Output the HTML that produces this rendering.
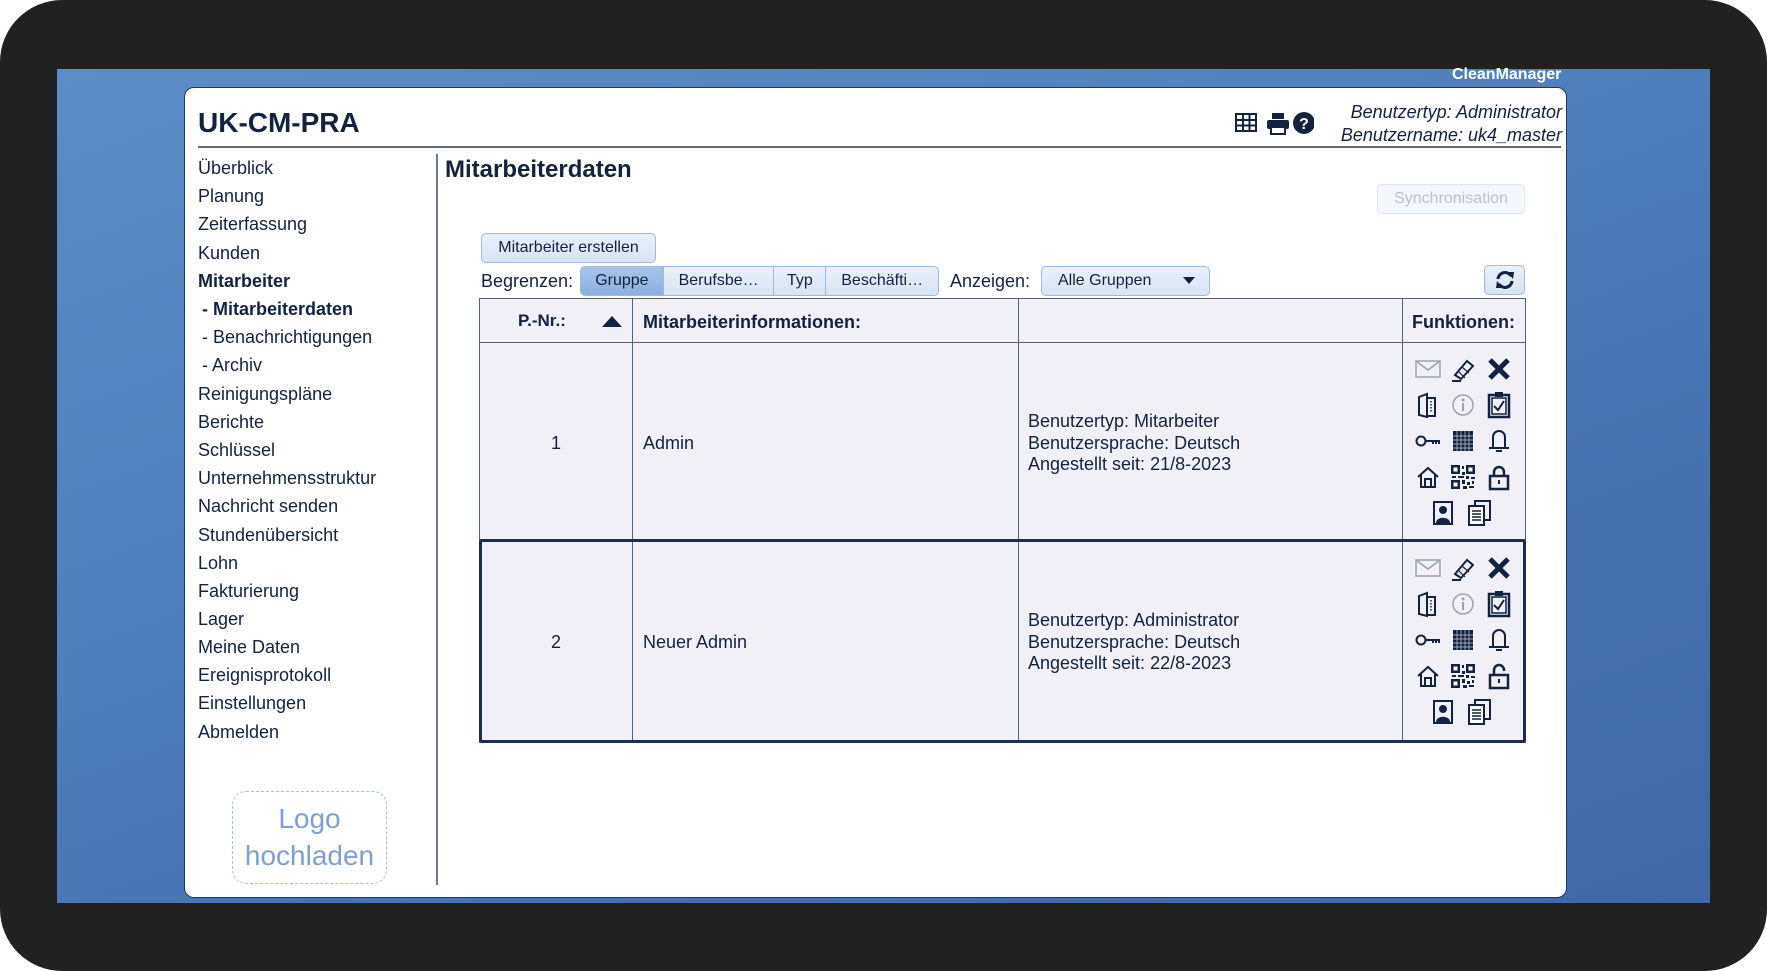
<!DOCTYPE html>
<html><head><meta charset="utf-8">
<style>
*{margin:0;padding:0;box-sizing:border-box}
body{width:1767px;height:971px;overflow:hidden;background:#fff;font-family:"Liberation Sans",sans-serif;color:#13223f;position:relative}
.frame{position:absolute;left:0;top:0;width:1767px;height:971px;border-radius:62px;background:#212121}
.blue{position:absolute;left:57px;top:69px;width:1653px;height:834px;background:linear-gradient(160deg,#5d8dc8 0%,#4f7fbd 40%,#4672b0 70%,#3f68a6 100%)}
.cm{position:absolute;left:1452px;top:66px;color:#fff;font-weight:bold;font-size:16px}
.panel{position:absolute;left:184px;top:87px;width:1383px;height:811px;background:#fff;border-radius:10px 10px 10px 10px;border:1px solid #24385a}
.abs{position:absolute}
.side div{position:absolute;left:198px;font-size:18px;white-space:nowrap}
.btn{position:absolute;border:1px solid #9dbbe0;background:linear-gradient(#e9f0f9,#d7e4f4);border-radius:5px;font-size:16px;display:flex;align-items:center;justify-content:center}
table{border-collapse:collapse}
.ic{position:absolute;width:28px;height:28px}
</style></head><body>
<div class="frame"></div>
<div class="blue"></div>
<div class="cm">CleanManager</div>
<div class="panel"></div>
<div class="abs" style="left:198px;top:107px;font-size:28px;font-weight:bold">UK-CM-PRA</div>
<div class="abs" style="left:198px;top:146px;width:1363px;height:2px;background:#5c6a80"></div>
<div class="abs" style="right:205px;top:101px;font-size:18px;font-style:italic;text-align:right;line-height:23px">Benutzertyp: Administrator<br>Benutzername: uk4_master</div>
<svg class="abs" style="left:1234px;top:111px" width="80" height="26" viewBox="0 0 80 26">
<g fill="none" stroke="#13223f" stroke-width="2"><rect x="2" y="3" width="20" height="17"/><path d="M2 9H22M2 14.5H22M9 3V20M15.5 3V20"/></g>
<g fill="#13223f"><rect x="38" y="2" width="12" height="6"/><rect x="33" y="9" width="22" height="9" rx="2"/><rect x="37" y="16" width="14" height="7" fill="#fff" stroke="#13223f" stroke-width="2"/></g>
<circle cx="70" cy="12" r="11" fill="#13223f"/><text x="70" y="18" font-size="16" font-weight="bold" fill="#fff" text-anchor="middle" font-family="Liberation Sans">?</text>
</svg>
<div class="side">
<div style="top:158px">Überblick</div>
<div style="top:186px">Planung</div>
<div style="top:214px">Zeiterfassung</div>
<div style="top:243px">Kunden</div>
<div style="top:271px;font-weight:bold">Mitarbeiter</div>
<div style="top:299px;font-weight:bold;left:202px">- Mitarbeiterdaten</div>
<div style="top:327px;left:202px">- Benachrichtigungen</div>
<div style="top:355px;left:202px">- Archiv</div>
<div style="top:384px">Reinigungspläne</div>
<div style="top:412px">Berichte</div>
<div style="top:440px">Schlüssel</div>
<div style="top:468px">Unternehmensstruktur</div>
<div style="top:496px">Nachricht senden</div>
<div style="top:525px">Stundenübersicht</div>
<div style="top:553px">Lohn</div>
<div style="top:581px">Fakturierung</div>
<div style="top:609px">Lager</div>
<div style="top:637px">Meine Daten</div>
<div style="top:665px">Ereignisprotokoll</div>
<div style="top:693px">Einstellungen</div>
<div style="top:722px">Abmelden</div>
</div>
<div class="abs" style="left:436px;top:154px;width:2px;height:731px;background:#6b7890"></div>
<div class="abs" style="left:232px;top:791px;width:155px;height:93px;border:1.5px dashed #a9c0e4;border-radius:14px;color:#7d9fd6;font-size:28px;text-align:center;line-height:37px;padding-top:8px">Logo<br>hochladen</div>
<div class="abs" style="left:445px;top:156px;font-size:24px;font-weight:bold">Mitarbeiterdaten</div>
<div class="btn" style="left:1377px;top:184px;width:148px;height:30px;color:#b8c3d2;border-color:#dde5ef;background:#f4f7fb">Synchronisation</div>
<div class="btn" style="left:481px;top:233px;width:175px;height:30px">Mitarbeiter erstellen</div>
<div class="abs" style="left:481px;top:271px;font-size:18px">Begrenzen:</div>
<div class="btn" style="left:580px;top:266px;width:359px;height:30px;padding:0;overflow:hidden;justify-content:flex-start">
<div style="width:83px;height:100%;background:linear-gradient(#a9c4ea,#8db0e0);display:flex;align-items:center;justify-content:center;border-right:1px solid #9dbbe0">Gruppe</div>
<div style="width:111px;height:100%;display:flex;align-items:center;justify-content:center;border-right:1px solid #9dbbe0">Berufsbe…</div>
<div style="width:52px;height:100%;display:flex;align-items:center;justify-content:center;border-right:1px solid #9dbbe0">Typ</div>
<div style="width:112px;height:100%;display:flex;align-items:center;justify-content:center">Beschäfti…</div>
</div>
<div class="abs" style="left:950px;top:271px;font-size:18px">Anzeigen:</div>
<div class="btn" style="left:1041px;top:266px;width:169px;height:30px;justify-content:flex-start;padding-left:16px">Alle Gruppen<span style="position:absolute;right:14px;top:10px;width:0;height:0;border-left:6px solid transparent;border-right:6px solid transparent;border-top:7px solid #13223f"></span></div>
<div class="btn" style="left:1484px;top:265px;width:41px;height:30px">
<svg width="22" height="22" viewBox="0 0 22 22"><g fill="none" stroke="#13223f" stroke-width="3"><path d="M4 10A7 7 0 0 1 17 7"/><path d="M18 12A7 7 0 0 1 5 15"/></g><path d="M13 3L20 3L19 10Z" fill="#13223f"/><path d="M9 19L2 19L3 12Z" fill="#13223f"/></svg></div>

<div class="abs" style="left:479px;top:298px;width:1047px;height:445px;background:#f0f0f6;border:1px solid #55617a"></div>
<div class="abs" style="left:479px;top:342px;width:1047px;height:1px;background:#55617a"></div>
<div class="abs" style="left:479px;top:539px;width:1047px;height:1px;background:#55617a"></div>
<div class="abs" style="left:632px;top:298px;width:1px;height:445px;background:#55617a"></div>
<div class="abs" style="left:1018px;top:298px;width:1px;height:445px;background:#55617a"></div>
<div class="abs" style="left:1402px;top:298px;width:1px;height:445px;background:#55617a"></div>
<div class="abs" style="left:479px;top:539px;width:1047px;height:204px;border:3.5px solid #1d2e4d;border-radius:3px"></div>
<div class="abs" style="left:518px;top:311px;font-size:17px;font-weight:bold">P.-Nr.:</div>
<div class="abs" style="left:602px;top:316px;width:0;height:0;border-left:10px solid transparent;border-right:10px solid transparent;border-bottom:11px solid #13223f"></div>
<div class="abs" style="left:643px;top:312px;font-size:18px;font-weight:bold">Mitarbeiterinformationen:</div>
<div class="abs" style="left:1412px;top:312px;font-size:18px;font-weight:bold">Funktionen:</div>
<div class="abs" style="left:551px;top:433px;font-size:18px">1</div>
<div class="abs" style="left:643px;top:433px;font-size:18px">Admin</div>
<div class="abs" style="left:1028px;top:411px;font-size:18px;line-height:21.5px">Benutzertyp: Mitarbeiter<br>Benutzersprache: Deutsch<br>Angestellt seit: 21/8-2023</div>
<div class="abs" style="left:551px;top:632px;font-size:18px">2</div>
<div class="abs" style="left:643px;top:632px;font-size:18px">Neuer Admin</div>
<div class="abs" style="left:1028px;top:610px;font-size:18px;line-height:21.5px">Benutzertyp: Administrator<br>Benutzersprache: Deutsch<br>Angestellt seit: 22/8-2023</div>

<svg width="0" height="0" style="position:absolute">
<defs>
<g id="mail"><rect x="2" y="6" width="24" height="16" fill="none" stroke="#9aa3b3" stroke-width="1.5"/><path d="M2 6L14 15L26 6" fill="none" stroke="#9aa3b3" stroke-width="1.5"/></g>
<g id="pen"><path d="M6 20L18 6L24 11L12 24Z" fill="none" stroke="#13223f" stroke-width="2"/><path d="M9 16L16 23M13 12L20 18" stroke="#13223f" stroke-width="1.2"/><path d="M3 26H12" stroke="#13223f" stroke-width="2"/></g>
<g id="x"><path d="M5 5L23 23M23 5L5 23" stroke="#13223f" stroke-width="5"/></g>
<g id="door"><path d="M5 6L13 3V26L5 24Z" fill="none" stroke="#13223f" stroke-width="2"/><path d="M13 7H21V25H13" fill="none" stroke="#13223f" stroke-width="2"/><path d="M17 10V22" stroke="#13223f" stroke-width="1.5" stroke-dasharray="1.5 1.5"/></g>
<g id="info"><circle cx="14" cy="14" r="10" fill="none" stroke="#9aa3b3" stroke-width="1.5"/><circle cx="14" cy="9" r="1.5" fill="#9aa3b3"/><path d="M14 12V20" stroke="#9aa3b3" stroke-width="2"/></g>
<g id="clip"><rect x="4" y="4" width="20" height="22" fill="none" stroke="#13223f" stroke-width="2.5"/><rect x="7" y="7" width="14" height="16" fill="none" stroke="#13223f" stroke-width="1.5"/><rect x="10" y="1" width="8" height="5" fill="#13223f"/><path d="M9 15L13 19L19 10" fill="none" stroke="#13223f" stroke-width="2"/></g>
<g id="key"><circle cx="7" cy="14" r="4.5" fill="none" stroke="#13223f" stroke-width="2"/><path d="M11 14H26M19 14V17M22 14V17M25 14V17" stroke="#13223f" stroke-width="2"/></g>
<g id="cal"><rect x="4" y="4" width="20" height="20" fill="#13223f"/><path d="M4 9H24M4 13H24M4 17H24M4 21H24M8 4V24M12 4V24M16 4V24M20 4V24" stroke="#c9cedb" stroke-width="0.7"/></g>
<g id="bell"><path d="M8 21V10A6 6 0 0 1 20 10V21Z" fill="none" stroke="#13223f" stroke-width="2"/><path d="M4 21H24M11 24H17" stroke="#13223f" stroke-width="2"/></g>
<g id="home"><path d="M4 14L14 5L24 14M7 12V24H21V12" fill="none" stroke="#13223f" stroke-width="2"/><rect x="11" y="16" width="6" height="8" fill="none" stroke="#13223f" stroke-width="2"/></g>
<g id="qr" fill="#13223f"><rect x="2" y="2" width="9" height="9"/><rect x="17" y="2" width="9" height="9"/><rect x="2" y="17" width="9" height="9"/><rect x="4.5" y="4.5" width="4" height="4" fill="#fff"/><rect x="19.5" y="4.5" width="4" height="4" fill="#fff"/><rect x="4.5" y="19.5" width="4" height="4" fill="#fff"/><rect x="13" y="3" width="2" height="3"/><rect x="13" y="9" width="3" height="3"/><rect x="3" y="13" width="4" height="2"/><rect x="9" y="13" width="6" height="2"/><rect x="17" y="13" width="3" height="3"/><rect x="22" y="14" width="4" height="2"/><rect x="13" y="17" width="3" height="4"/><rect x="18" y="19" width="3" height="3"/><rect x="23" y="18" width="2" height="3"/><rect x="14" y="23" width="4" height="3"/><rect x="20" y="23" width="5" height="2"/></g>
<g id="lock"><path d="M9 13V9A5 5 0 0 1 19 9V13" fill="none" stroke="#13223f" stroke-width="2.5"/><rect x="5" y="13" width="18" height="13" fill="none" stroke="#13223f" stroke-width="2.5"/><rect x="13" y="17" width="2" height="4" fill="#13223f"/></g>
<g id="unlock"><path d="M9 13V8A5 5 0 0 1 19 8V9" fill="none" stroke="#13223f" stroke-width="2.5"/><rect x="5" y="13" width="18" height="13" fill="none" stroke="#13223f" stroke-width="2.5"/><rect x="13" y="17" width="2" height="4" fill="#13223f"/></g>
<g id="user"><rect x="5" y="3" width="18" height="22" fill="none" stroke="#13223f" stroke-width="2"/><circle cx="14" cy="11" r="4" fill="#13223f"/><path d="M7 24C7 17 21 17 21 24Z" fill="#13223f"/></g>
<g id="docs"><rect x="10" y="2" width="15" height="19" fill="none" stroke="#13223f" stroke-width="2"/><rect x="4" y="7" width="15" height="19" fill="#fff" stroke="#13223f" stroke-width="2"/><path d="M7 12H16M7 15H16M7 18H16M7 21H16" stroke="#13223f" stroke-width="1.5"/></g>
</defs></svg>

<svg class="abs" style="left:0;top:0" width="1767" height="971">
<g>
<use href="#mail" x="1414" y="355"/><use href="#pen" x="1449" y="355"/><use href="#x" x="1485" y="355"/>
<use href="#door" x="1414" y="391"/><use href="#info" x="1449" y="391"/><use href="#clip" x="1485" y="391"/>
<use href="#key" x="1414" y="427"/><use href="#cal" x="1449" y="427"/><use href="#bell" x="1485" y="427"/>
<use href="#home" x="1414" y="463"/><use href="#qr" x="1449" y="463"/><use href="#lock" x="1485" y="463"/>
<use href="#user" x="1429" y="499"/><use href="#docs" x="1465" y="499"/>
</g>
<g>
<use href="#mail" x="1414" y="554"/><use href="#pen" x="1449" y="554"/><use href="#x" x="1485" y="554"/>
<use href="#door" x="1414" y="590"/><use href="#info" x="1449" y="590"/><use href="#clip" x="1485" y="590"/>
<use href="#key" x="1414" y="626"/><use href="#cal" x="1449" y="626"/><use href="#bell" x="1485" y="626"/>
<use href="#home" x="1414" y="662"/><use href="#qr" x="1449" y="662"/><use href="#unlock" x="1485" y="662"/>
<use href="#user" x="1429" y="698"/><use href="#docs" x="1465" y="698"/>
</g>
</svg>
</body></html>
